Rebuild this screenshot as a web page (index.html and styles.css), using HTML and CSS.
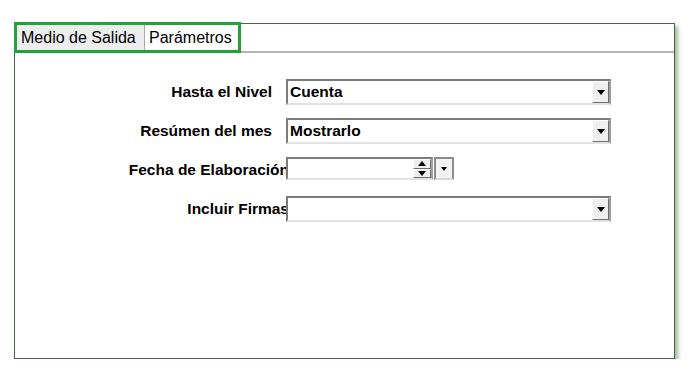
FILE: index.html
```html
<!DOCTYPE html>
<html lang="es">
<head>
	<meta charset="UTF-8">
	<title>Parámetros</title>
	<link rel="stylesheet" href="styles.css">
</head>
<body>
	<div class="frame">
		<div class="tabbar">
			<div class="tabs">
				<span class="tab tab-gray">Medio de Salida</span>
				<span class="tab tab-active">Parámetros</span>
			</div>
		</div>
		<div class="form">
			<div class="row">
				<span class="lbl">Hasta el Nivel</span>
				<div class="combo"><span class="val">Cuenta</span><span class="btn"><i class="arrow"></i></span></div>
			</div>
			<div class="row">
				<span class="lbl">Resúmen del mes</span>
				<div class="combo"><span class="val">Mostrarlo</span><span class="btn"><i class="arrow"></i></span></div>
			</div>
			<div class="row">
				<span class="lbl lbl-over">Fecha de Elaboración</span>
				<div class="date">
					<div class="date-field">
						<span class="spin"><span class="spin-up"><i class="arrow-up"></i></span><span class="spin-down"><i class="arrow"></i></span></span>
					</div>
					<span class="btn btn-solo"><i class="arrow arrow-sm"></i></span>
				</div>
			</div>
			<div class="row">
				<span class="lbl lbl-over">Incluir Firmas</span>
				<div class="combo"><span class="val"></span><span class="btn"><i class="arrow"></i></span></div>
			</div>
		</div>
	</div>
</body>
</html>
```
FILE: styles.css
```css
body{margin:0;padding:23px 0 0 14px;background:#fff;font-family:"Liberation Sans",Arial,sans-serif;color:#000;}
.frame{width:661px;height:336px;box-sizing:border-box;border:1px solid #4a6540;box-shadow:3px 3px 4px rgba(90,130,70,.55);}
.tabbar{height:29px;box-sizing:border-box;border-bottom:2px solid #b4b4b4;display:flex;align-items:flex-start;}
.tabs{display:flex;margin:-2px 0 0 -1px;height:31px;box-sizing:border-box;border:3px solid #21a33b;}
.tab{display:block;font-size:16px;line-height:25px;padding:0 4px;box-sizing:border-box;white-space:nowrap;}
.tab-gray{width:128px;background:#ededed;border-right:1px solid #a8a8a8;}
.tab-active{width:93px;background:#fff;padding-left:4px;}
.form{padding-top:26px;display:flex;flex-direction:column;gap:13px;}
.row{display:flex;align-items:center;height:26px;}
.lbl{width:257px;margin-right:14px;text-align:right;font-weight:bold;font-size:15.5px;white-space:nowrap;}
.lbl-over{width:274px;margin-right:-3px;}
.combo{width:325px;height:26px;box-sizing:border-box;border:2px solid;border-color:#7c7c7c #a0a0a0 #e2e2e2 #7c7c7c;background:#fff;display:flex;align-items:center;}
.val{flex:1;padding-left:2px;font-weight:bold;font-size:15.5px;}
.btn{width:17px;height:100%;box-sizing:border-box;background:#efefef;border:1px solid;border-color:#fff #6e6e6e #6e6e6e #fff;display:flex;align-items:center;justify-content:center;}
.arrow{width:0;height:0;border-left:4px solid transparent;border-right:4px solid transparent;border-top:5px solid #000;}
.arrow-up{width:0;height:0;border-left:4px solid transparent;border-right:4px solid transparent;border-bottom:5px solid #000;}
.arrow-sm{border-left-width:3px;border-right-width:3px;border-top-width:4px;}
.date{display:flex;gap:1px;height:23px;align-self:flex-start;}
.date-field{width:147px;box-sizing:border-box;border:2px solid;border-color:#7c7c7c #a0a0a0 #e2e2e2 #7c7c7c;background:#fff;display:flex;justify-content:flex-end;}
.spin{width:18px;display:flex;flex-direction:column;}
.spin-up,.spin-down{flex:1;background:#efefef;border:1px solid;border-color:#fff #6e6e6e #6e6e6e #fff;display:flex;align-items:center;justify-content:center;}
.btn-solo{width:20px;border:2px solid;border-color:#8c8c8c #8c8c8c #d8d8d8 #8c8c8c;background:#f2f2f2;}
```
